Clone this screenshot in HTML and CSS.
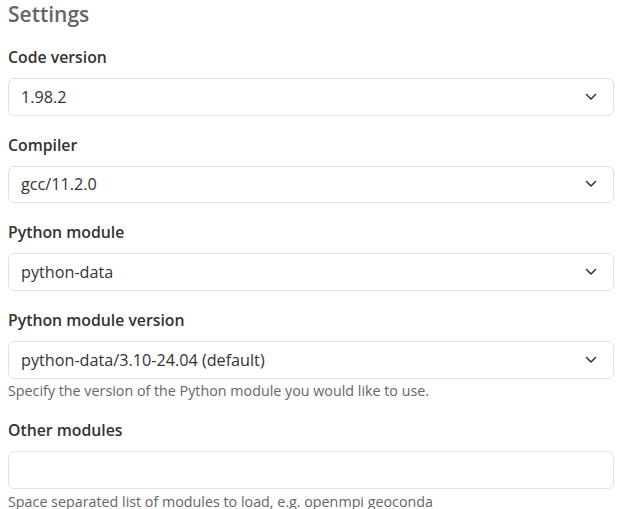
FILE: index.html
```html
<!DOCTYPE html>
<html lang="en">
<head>
<meta charset="utf-8">
<title>Settings</title>
<link rel="stylesheet" href="styles.css">
</head>
<body>
<div class="page">
  <h2 class="title">Settings</h2>

  <div class="group">
    <label class="label">Code version</label>
    <div class="select"><span class="value">1.98.2</span><svg class="chev" viewBox="0 0 12 8" width="12" height="8"><path d="M1.5 1.5 L6 6 L10.5 1.5" fill="none" stroke="#343a40" stroke-width="1.6" stroke-linecap="round" stroke-linejoin="round"/></svg></div>
  </div>

  <div class="group">
    <label class="label">Compiler</label>
    <div class="select"><span class="value">gcc/11.2.0</span><svg class="chev" viewBox="0 0 12 8" width="12" height="8"><path d="M1.5 1.5 L6 6 L10.5 1.5" fill="none" stroke="#343a40" stroke-width="1.6" stroke-linecap="round" stroke-linejoin="round"/></svg></div>
  </div>

  <div class="group">
    <label class="label">Python module</label>
    <div class="select"><span class="value">python-data</span><svg class="chev" viewBox="0 0 12 8" width="12" height="8"><path d="M1.5 1.5 L6 6 L10.5 1.5" fill="none" stroke="#343a40" stroke-width="1.6" stroke-linecap="round" stroke-linejoin="round"/></svg></div>
  </div>

  <div class="group with-help">
    <label class="label">Python module version</label>
    <div class="select"><span class="value">python-data/3.10-24.04 (default)</span><svg class="chev" viewBox="0 0 12 8" width="12" height="8"><path d="M1.5 1.5 L6 6 L10.5 1.5" fill="none" stroke="#343a40" stroke-width="1.6" stroke-linecap="round" stroke-linejoin="round"/></svg></div>
    <div class="help">Specify the version of the Python module you would like to use.</div>
  </div>

  <div class="group last">
    <label class="label">Other modules</label>
    <div class="input"></div>
    <div class="help tight">Space separated list of modules to load, e.g. openmpi geoconda</div>
  </div>
</div>
</body>
</html>
```

FILE: styles.css
```css
html, body {
  margin: 0;
  padding: 0;
  background: #ffffff;
}

.page {
  padding: 0 14px 0 8px;
  font-family: "Open Sans", "Noto Sans", sans-serif;
  color: #333333;
}

.title {
  margin: 0 0 17px 0;
  font-size: 21px;
  line-height: 28px;
  font-weight: 600;
  color: #666666;
}

.group {
  margin-bottom: 17.2px;
}

.group.with-help {
  margin-bottom: 17px;
}

.group.last {
  margin-bottom: 0;
}

.label {
  display: block;
  font-size: 15.8px;
  line-height: 24px;
  font-weight: 600;
  color: #333333;
  margin-bottom: 9px;
}

.select, .input {
  box-sizing: border-box;
  height: 37.5px;
  border: 1px solid #dee2e6;
  border-radius: 6px;
  display: flex;
  align-items: center;
  justify-content: space-between;
  padding: 0 16px 0 12px;
}

.value {
  font-size: 16.2px;
  color: #333333;
}

.chev {
  display: block;
}

.help {
  margin-top: 2.5px;
  font-size: 14.3px;
  line-height: 20px;
  color: #666666;
}

.help.tight {
  margin-top: 5px;
  line-height: 16px;
}
```
